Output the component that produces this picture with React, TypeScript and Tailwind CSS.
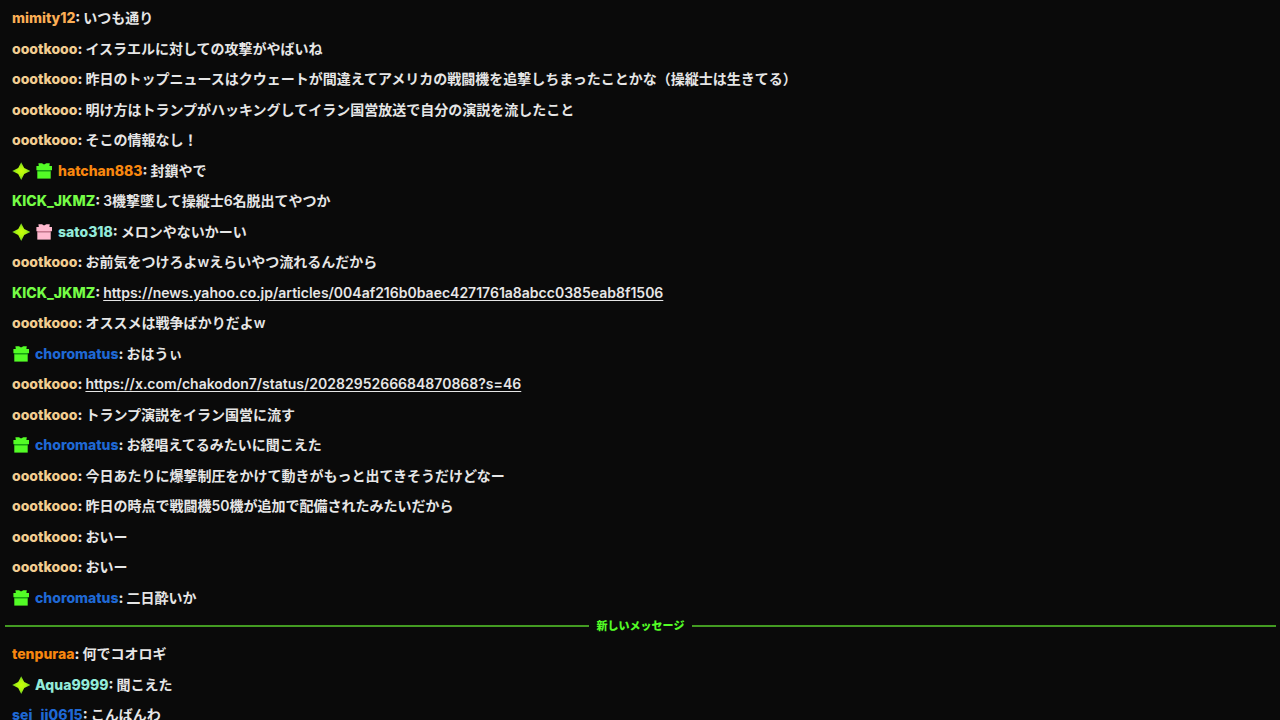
type Badge = 'spark' | 'gift' | 'pinkGift';

type Message = {
  user: string;
  color: string;
  text: string;
  badges?: Badge[];
  link?: boolean;
};

const SAND = 'text-[#f2cd91]';
const ORANGE = 'text-[#f8870f]';
const GREEN = 'text-[#75fd46]';
const BLUE = 'text-[#1f68d4]';
const MINT = 'text-[#93ebda]';

const earlier: Message[] = [
  { user: 'mimity12', color: 'text-[#fbae55]', text: 'いつも通り' },
  { user: 'oootkooo', color: SAND, text: 'イスラエルに対しての攻撃がやばいね' },
  { user: 'oootkooo', color: SAND, text: '昨日のトップニュースはクウェートが間違えてアメリカの戦闘機を追撃しちまったことかな（操縦士は生きてる）' },
  { user: 'oootkooo', color: SAND, text: '明け方はトランプがハッキングしてイラン国営放送で自分の演説を流したこと' },
  { user: 'oootkooo', color: SAND, text: 'そこの情報なし！' },
  { user: 'hatchan883', color: ORANGE, text: '封鎖やで', badges: ['spark', 'gift'] },
  { user: 'KICK_JKMZ', color: GREEN, text: '3機撃墜して操縦士6名脱出てやつか' },
  { user: 'sato318', color: MINT, text: 'メロンやないかーい', badges: ['spark', 'pinkGift'] },
  { user: 'oootkooo', color: SAND, text: 'お前気をつけろよwえらいやつ流れるんだから' },
  { user: 'KICK_JKMZ', color: GREEN, text: 'https://news.yahoo.co.jp/articles/004af216b0baec4271761a8abcc0385eab8f1506', link: true },
  { user: 'oootkooo', color: SAND, text: 'オススメは戦争ばかりだよw' },
  { user: 'choromatus', color: BLUE, text: 'おはうぃ', badges: ['gift'] },
  { user: 'oootkooo', color: SAND, text: 'https://x.com/chakodon7/status/2028295266684870868?s=46', link: true },
  { user: 'oootkooo', color: SAND, text: 'トランプ演説をイラン国営に流す' },
  { user: 'choromatus', color: BLUE, text: 'お経唱えてるみたいに聞こえた', badges: ['gift'] },
  { user: 'oootkooo', color: SAND, text: '今日あたりに爆撃制圧をかけて動きがもっと出てきそうだけどなー' },
  { user: 'oootkooo', color: SAND, text: '昨日の時点で戦闘機50機が追加で配備されたみたいだから' },
  { user: 'oootkooo', color: SAND, text: 'おいー' },
  { user: 'oootkooo', color: SAND, text: 'おいー' },
  { user: 'choromatus', color: BLUE, text: '二日酔いか', badges: ['gift'] },
];

const recent: Message[] = [
  { user: 'tenpuraa', color: ORANGE, text: '何でコオロギ' },
  { user: 'Aqua9999', color: MINT, text: '聞こえた', badges: ['spark'] },
  { user: 'sei_ji0615', color: BLUE, text: 'こんばんわ' },
];

function Spark() {
  return (
    <svg viewBox="0 0 18 18" className="size-[18px] shrink-0" aria-hidden="true">
      <defs>
        <radialGradient id="spark-fill">
          <stop offset="0" stopColor="#c8ff08" />
          <stop offset="0.5" stopColor="#aef510" />
          <stop offset="1" stopColor="#63c420" />
        </radialGradient>
      </defs>
      <path d="M9.2 0.2 12.2 6 18.4 9 12.2 12 9.2 18 6.2 12 0.2 9 6.2 6Z" fill="url(#spark-fill)" />
    </svg>
  );
}

function Gift({ pink = false }: { pink?: boolean }) {
  const main = pink ? '#ffb9cf' : '#53fc26';
  const shade = pink ? '#c9778f' : '#16a313';
  return (
    <svg viewBox="0 0 18 18" className="size-[18px] shrink-0" aria-hidden="true">
      <path d="M3.4 1.2 7 1.2 9 2.6 11.4 1.2 14.8 1.2 14.4 4 17 4 17 8.2 1.4 8.2 1.4 4 3.8 4Z" fill={main} />
      <path d="M2.3 8h13.4v1.8H2.3Z" fill={shade} />
      <path d="M2.3 9.4h13.4v7.2H2.3Z" fill={main} />
    </svg>
  );
}

function Row({ message }: { message: Message }) {
  const { user, color, text, badges = [], link } = message;
  return (
    <li className="flex items-center gap-[5px] px-3 py-1">
      {badges.map((badge) =>
        badge === 'spark' ? <Spark key={badge} /> : <Gift key={badge} pink={badge === 'pinkGift'} />,
      )}
      <p className="min-w-0 break-words">
        <span className={`text-[14px] font-extrabold ${color}`}>{user}</span>
        <span className="text-[14px] font-extrabold">: </span>
        {link ? (
          <a href={text} className="text-[14px] font-semibold underline underline-offset-2">{text}</a>
        ) : (
          <span className="text-[14px] font-semibold">{text}</span>
        )}
      </p>
    </li>
  );
}

export default function App() {
  return (
    <main className="h-screen overflow-hidden bg-[#0a0a0a] pt-[3px] font-['Inter','Noto_Sans_CJK_JP',sans-serif] text-[15px] leading-normal text-[#e6e6e6]">
      <ul>
        {earlier.map((message, i) => <Row key={i} message={message} />)}
      </ul>
      <div className="flex h-[26px] items-center gap-2 pl-[5px] pr-1">
        <div className="h-[2px] flex-1 bg-[#439b22]" />
        <span className="text-[11px] font-extrabold text-[#53fc26]">新しいメッセージ</span>
        <div className="h-[2px] flex-1 bg-[#439b22]" />
      </div>
      <ul>
        {recent.map((message, i) => <Row key={i} message={message} />)}
      </ul>
    </main>
  );
}
